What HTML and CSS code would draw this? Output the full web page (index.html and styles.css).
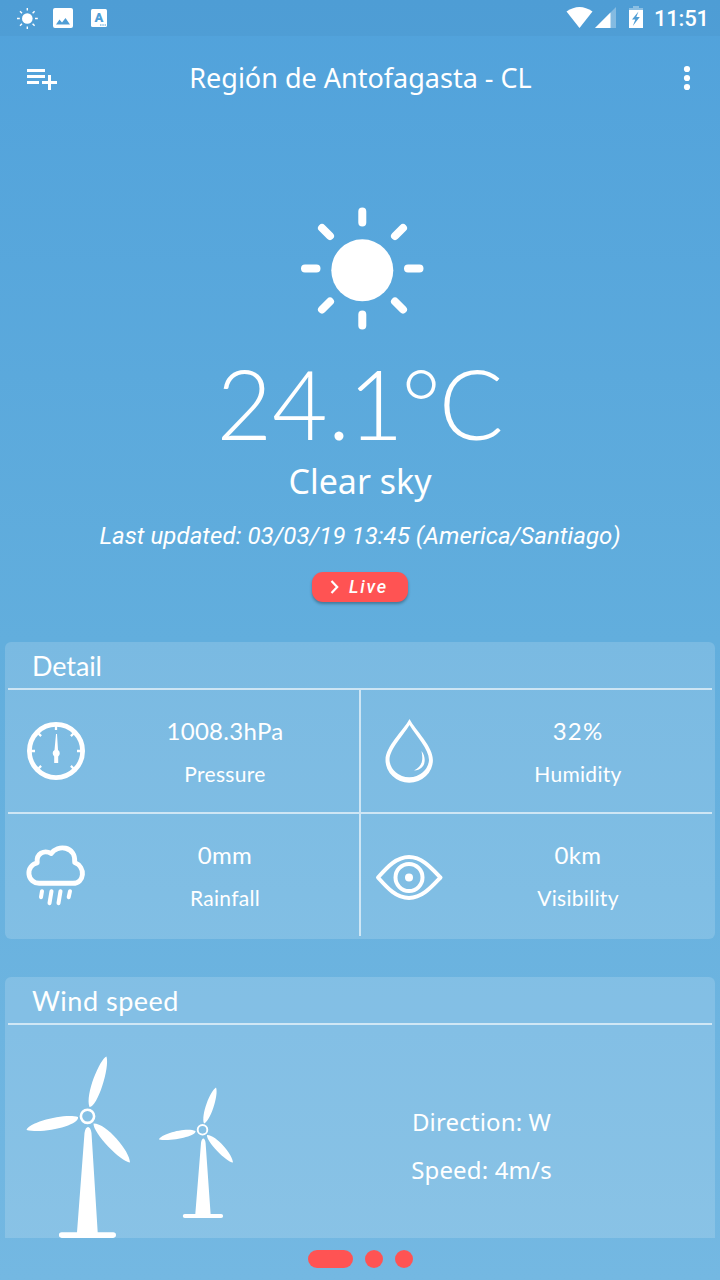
FILE: index.html
```html
<!DOCTYPE html>
<html lang="en">
<head>
<meta charset="utf-8">
<title>Weather</title>
<link rel="stylesheet" href="styles.css">
</head>
<body>
<div class="screen">
  <div class="status">
    <svg class="status-left" width="120" height="36" viewBox="0 0 120 36" fill="#fff">
      <circle cx="27.300" cy="18.500" r="5.300"/>
      <path d="M27.300 8v2.600M27.300 26.400V29M17 18.500h2.800M35 18.500h2.800M20 11.200l2 2M32.600 23.800l2 2M34.600 11.200l-2 2M22 23.800l-2 2" stroke="#fff" stroke-width="1.400"/>
      <path fill-rule="evenodd" d="M55 8h16a2 2 0 0 1 2 2v16a2 2 0 0 1-2 2H55a2 2 0 0 1-2-2V10a2 2 0 0 1 2-2zM56 24.500h14L65.500 18l-3.500 4.500-2.500-3z"/>
      <rect x="91" y="9" width="16" height="18" rx="1.500"/>
      <path d="M100 25h1.500M102.300 25h1.500M104.600 25h1.400" stroke="#4f9fd8"/>
      <text class="badge-letter" x="98.900" y="22" text-anchor="middle">A</text>
    </svg>
    <svg class="status-right" width="80" height="36" viewBox="566 0 80 36" fill="#fff">
      <path d="M566.500 11.500Q579.500 2.500 592.500 11.500L579.500 28z"/>
      <path d="M616 7v21h-21z" opacity=".3"/><path d="M610.500 12.500V28H595z"/>
      <path d="M633 6h6v2h4v3h-14V8h4z" opacity=".35"/>
      <path fill-rule="evenodd" d="M629 10h14v18h-14zM638.500 11.500l-6.500 8h3.300l-2.500 6.500 7-9h-3.500z"/>
    </svg>
    <span class="clock">11:51</span>
  </div>

  <div class="toolbar">
    <svg width="34" height="34" viewBox="25 61 34 34" fill="#fff"><path d="M27 69h18v3H27zM27 75h18v3H27zM27 81h12v3H27zM42 81h6v-6h3v6h6v3h-6v6h-3v-6h-6z"/></svg>
    <h1 class="place">Región de Antofagasta - CL</h1>
    <svg width="12" height="34" viewBox="681 61 12 34" fill="#fff"><circle cx="687" cy="69" r="3.100"/><circle cx="687" cy="78" r="3.100"/><circle cx="687" cy="87" r="3.100"/></svg>
  </div>

  <div class="hero">
    <svg class="sun" width="124" height="124" viewBox="300 206 124 124" fill="#fff">
      <circle cx="362.300" cy="270.300" r="31"/>
      <path d="M362.300 211.500v11M362.300 314.500v11M305 268.500h11.500M408 268.500h11.500M322 228l8 8M395 301.500l8 8M403 228l-8 8M330 301.500l-8 8" stroke="#fff" stroke-width="8" stroke-linecap="round"/>
    </svg>
    <div class="temp">24<span class="temp-tight">.1°</span>C</div>
    <div class="sky">Clear sky</div>
    <div class="updated">Last updated: 03/03/19 13:45 (America/Santiago)</div>
    <button class="live"><svg width="10" height="14" viewBox="0 0 10 14" fill="none" stroke="#fff" stroke-width="2.200"><path d="M1.500 1l5.700 6-5.700 6"/></svg><span>Live</span></button>
  </div>

  <section class="card">
    <h2 class="card-title detail-title">Detail</h2>
    <div class="grid">
      <div class="cell left">
        <svg class="icon" width="76" height="76" viewBox="18 713 76 76" fill="none" stroke="#fff">
          <circle cx="56" cy="751" r="26.600" stroke-width="4.800"/>
          <path d="M56 726v4M31 751h4M77 751h4M38.500 733.500l2.600 2.600M73.500 733.500l-2.600 2.600M38.500 768.500l2.600-2.600M73.500 768.500l-2.600-2.600" stroke-width="2.300"/>
          <path fill="#fff" stroke="none" d="M56 734h1l1 16a3.900 3.900 0 0 1 .2 6.400V763h-4v-6.600A3.900 3.900 0 0 1 54.500 750z"/>
        </svg>
        <div class="reading"><span class="value">1008.3hPa</span><span class="label">Pressure</span></div>
      </div>
      <div class="cell">
        <svg class="icon" width="76" height="76" viewBox="371 713 76 76" fill="none" stroke="#fff">
          <path fill="#fff" stroke="none" fill-rule="evenodd" d="M409.500 719C403 731 385.500 746 385.500 760a23.700 22.800 0 0 0 47.400 0C432.900 746 416 731 409.500 719zM409.500 725C403 736 389.500 749 389.500 760a19.800 18.600 0 0 0 39.500 0C429 749 416 736 409.500 725z"/>
          <path fill="#fff" stroke="none" d="M421.500 751c5.500 7 4.500 19-7.500 19.500 8-4 9.500-10 7.500-19.500z"/>
        </svg>
        <div class="reading"><span class="value percent">32%</span><span class="label">Humidity</span></div>
      </div>
      <div class="cell left lower">
        <svg class="icon" width="76" height="76" viewBox="18 837 76 76" fill="none" stroke="#fff" stroke-linecap="round">
          <path d="M39.500 883.300a10.300 10.300 0 0 1-2.300-20.400C36 853.500 44 849.500 51.300 853.500 57 844.500 76 845.500 74.700 862.500 86 867 84.500 883.300 73 883.300z" stroke-width="4.900" stroke-linejoin="round"/>
          <path d="M42 891.200l-1 6M51.500 891.200l-2 12M60.500 891.200l-2 12M70 891.200l-1.300 6" stroke-width="4"/>
        </svg>
        <div class="reading"><span class="value">0mm</span><span class="label">Rainfall</span></div>
      </div>
      <div class="cell lower">
        <svg class="icon" width="76" height="76" viewBox="371 837 76 76" fill="none" stroke="#fff" stroke-width="4">
          <path d="M378 877.500C387 867.500 396 857 409 857S431 867.500 440.500 877.500C431 887.500 422 898 409 898S387 887.500 378 877.500z" stroke-linejoin="round"/>
          <circle cx="409" cy="877.500" r="13.500"/><circle cx="409" cy="877.500" r="4" fill="#fff" stroke="none"/>
        </svg>
        <div class="reading"><span class="value">0km</span><span class="label">Visibility</span></div>
      </div>
    </div>
  </section>

  <section class="card wind">
    <h2 class="card-title wind-title">Wind speed</h2>
    <div class="wind-body">
      <svg class="turbines" width="240" height="190" viewBox="8 1048 240 190" fill="#fff">
        <path d="M106.500 1056.500C100 1059 85 1094 89.500 1107 97 1108 110 1068 106.500 1056.500zM26.500 1130C29 1122 65 1113 78 1117 80 1125 45 1134 26.500 1130zM93.500 1123.500C106 1123 130 1151 130 1162.500 121 1162 93 1133 93.500 1123.500z"/>
        <circle cx="87.500" cy="1116.300" r="6.600" fill="none" stroke="#fff" stroke-width="2.600"/>
        <path d="M84.500 1133c1-8 6-8 7 0l6.200 99.300h15.500a2.800 2.800 0 0 1 0 5.600H61.700a2.800 2.800 0 0 1 0-5.600H77z"/>
        <path d="M216 1087.500C210 1091 201 1115 204 1123.500 210 1122 219 1095 216 1087.500zM159 1139.500C161 1134 186 1127 195.500 1131 197 1136 171 1142 159 1139.500zM207 1135C216 1134.500 233 1155 233 1162.500 226 1162 206 1141 207 1135z"/>
        <circle cx="202.500" cy="1129.800" r="4.800" fill="none" stroke="#fff" stroke-width="1.900"/>
        <path d="M201 1143c.7-6 4-6 4.600 0l5 71h10.500a2 2 0 0 1 0 4h-36.300a2 2 0 0 1 0-4h10.500z"/>
      </svg>
      <div class="wind-info"><span class="direction">Direction: W</span><span class="speed">Speed: 4m/s</span></div>
    </div>
  </section>

  <div class="pager"><i class="dot active"></i><i class="dot"></i><i class="dot"></i></div>
</div>
</body>
</html>
```
FILE: styles.css
```css
* { box-sizing: border-box; }
body { margin: 0; }
.screen {
  width: 720px; height: 1280px; overflow: hidden;
  display: flex; flex-direction: column;
  color: #fff; font-family: "Noto Sans", sans-serif;
  background: linear-gradient(#51a2db, #62aedd 50%, #74b8e2);
}
svg { display: block; flex: none; }
.status { height: 36px; flex: none; display: flex; background: rgba(0, 0, 0, .027); }
.status-right { margin-left: 446px; }
.badge-letter { font: 900 13px Roboto, sans-serif; fill: #4f9fd8; }
.clock { margin-left: 8px; font: 500 22px/38px Roboto, sans-serif; letter-spacing: -.2px; }
.toolbar { height: 84px; flex: none; padding: 0 27px 0 25px; display: flex; align-items: center; justify-content: space-between; }
.place { margin: -1px 0 0 -19px; font-size: 27px; font-weight: 400; line-height: 40px; white-space: nowrap; }
.hero { height: 522px; flex: none; padding-top: 86px; display: flex; flex-direction: column; align-items: center; }
.sun { margin-left: 4px; }
.temp { margin-top: 18px; height: 110px; font: 300 96px/110px Lato, sans-serif; white-space: nowrap; }
.temp-tight { letter-spacing: -2.300px; }
.sky { height: 46px; font-size: 34px; line-height: 46px; }
.updated { margin-top: 12px; height: 40px; font: italic 400 24px/40px Roboto, sans-serif; letter-spacing: .06px; white-space: nowrap; }
.live {
  margin-top: 16px; width: 96px; height: 30px; flex: none; padding: 0 0 0 18px; border: 0; border-radius: 11px;
  display: flex; align-items: center; gap: 9px; background: #ff5353; color: #fff;
  font: italic 500 18px/32px Roboto, sans-serif; letter-spacing: 1.800px;
  box-shadow: 0 2px 3px rgba(0, 0, 0, .3);
}
.card { width: 710px; height: 297px; margin: 0 5px; padding: 3px; flex: none; border-radius: 6px; background: rgba(255, 255, 255, .155); font-family: Lato, sans-serif; }
.card-title { margin: 0; height: 45px; padding-left: 24px; border-bottom: 2px solid rgba(255, 255, 255, .62); font-size: 27px; font-weight: 400; line-height: 42px; }
.card .card-title { height: 45px; }
.detail-title { letter-spacing: -.1px; }
.wind-title { letter-spacing: .5px; }
.grid { display: grid; grid-template-columns: 353px 351px; grid-template-rows: 122px 124px; }
.cell { display: flex; padding-left: 10px; }
.left { border-right: 2px solid rgba(255, 255, 255, .62); }
.lower { border-top: 2px solid rgba(255, 255, 255, .62); }
.icon { margin-top: 23px; }
.reading { width: 262px; display: flex; flex-direction: column; align-items: center; padding-top: 25px; }
.value { font-size: 24px; line-height: 32px; letter-spacing: .3px; }
.percent { letter-spacing: 1.200px; }
.label { font-size: 21px; line-height: 28px; margin-top: 13px; letter-spacing: .3px; }
.wind { height: 261px; margin-top: 38px; padding-bottom: 0; border-radius: 6px 6px 0 0; }
.wind-body { display: flex; padding-top: 23px; }
.wind-info { width: 467px; flex: none; padding-top: 58px; display: flex; flex-direction: column; align-items: center; gap: 16px; font: 24px/32px "Noto Sans", sans-serif; letter-spacing: .15px; }
.pager { height: 42px; flex: none; display: flex; gap: 12px; align-items: center; padding-left: 308px; }
.dot { width: 18px; height: 18px; border-radius: 9px; background: #ff5353; }
.active { width: 45px; }
```
